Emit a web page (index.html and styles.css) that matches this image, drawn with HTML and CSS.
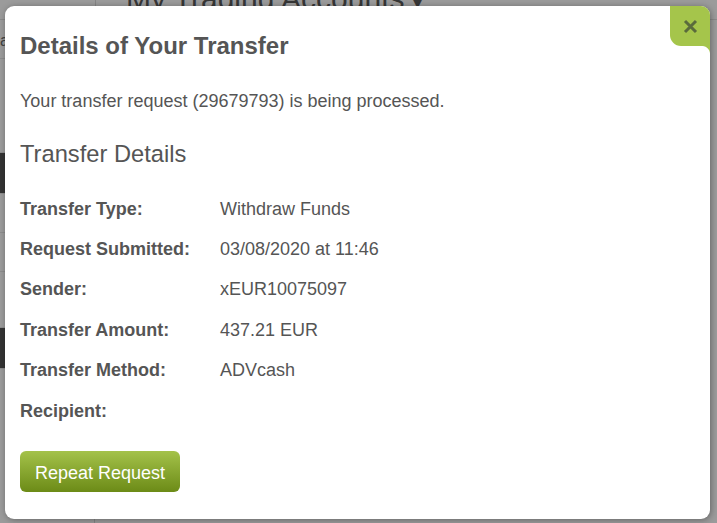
FILE: index.html
```html
<!DOCTYPE html>
<html lang="en">
<head>
    <meta charset="UTF-8">
    <meta name="viewport" content="width=device-width, initial-scale=1.0">
    <title>My Trading Accounts</title>
    <link rel="stylesheet" href="styles.css">
</head>
<body>
    <div class="page">
        <header class="page-head">
            <div class="logo-cell"></div>
            <h1>My Trading Accounts <span class="caret">&#9662;</span></h1>
        </header>
        <aside class="side">
            <div class="side-row">a</div>
            <div class="side-row"></div>
            <div class="side-row dark"></div>
            <div class="side-row"></div>
            <div class="side-row"></div>
            <div class="side-row"></div>
            <div class="side-row dark"></div>
        </aside>
    </div>
    <div class="overlay"></div>

    <div class="modal">
        <a href="#" class="modal-close">
            <svg width="15" height="15" viewBox="0 0 15 15">
                <path d="M2 2 L13 13 M13 2 L2 13" stroke="#5a6b3c" stroke-width="3" fill="none"/>
            </svg>
        </a>
        <h2>Details of Your Transfer</h2>
        <p class="status">Your transfer request (29679793) is being processed.</p>
        <h3>Transfer Details</h3>
        <dl class="details">
            <dt>Transfer Type:</dt>
            <dd>Withdraw Funds</dd>
            <dt>Request Submitted:</dt>
            <dd>03/08/2020 at 11:46</dd>
            <dt>Sender:</dt>
            <dd>xEUR10075097</dd>
            <dt>Transfer Amount:</dt>
            <dd>437.21 EUR</dd>
            <dt>Transfer Method:</dt>
            <dd>ADVcash</dd>
            <dt>Recipient:</dt>
            <dd></dd>
        </dl>
        <button type="button" class="btn-repeat">Repeat Request</button>
    </div>
</body>
</html>
```

FILE: styles.css
```css
body{
    margin: 0;
    height: 523px;
    overflow: hidden;
    font-family: 'Liberation Sans', Arial, sans-serif;
    background: #f2f2f2;
}

/* page behind the dialog */
.page{
    height: 100%;
    display: grid;
    grid-template-columns: 95px 1fr;
    grid-template-rows: 20px 1fr;
}
.page-head{
    grid-column: 1 / 3;
    display: flex;
    border-bottom: 1px solid #d8d8d8;
}
.logo-cell{
    width: 95px;
    border-right: 1px solid #d0d0d0;
}
.page-head h1{
    margin: -18px 0 0 30px;
    font-weight: normal;
    font-size: 30px;
    color: #555;
}
.caret{
    font-size: 18px;
}
.side{
    display: flex;
    flex-direction: column;
    border-right: 1px solid #d0d0d0;
}
.side-row{
    height: 39px;
    border-bottom: 1px solid #dcdcdc;
    color: #666;
    font-size: 16px;
    padding-top: 12px;
    box-sizing: border-box;
}
.side-row:nth-child(2){
    height: 94px;
}
.side-row.dark{
    background: #505050;
    height: 41px;
}
.side-row:nth-child(6){
    height: 56px;
}

.overlay{
    position: absolute;
    inset: 0;
    background: rgba(0, 0, 0, .36);
}

/* dialog */
.modal{
    position: absolute;
    left: 5px;
    top: 6px;
    width: 705px;
    height: 513px;
    box-sizing: border-box;
    padding: 26px 15px 0;
    background: #fff;
    border-radius: 9px;
    box-shadow: 1px 1px 6px rgba(0, 0, 0, .35);
    color: #555;
}
.modal-close{
    position: absolute;
    top: 0;
    right: 0;
    width: 40px;
    height: 40px;
    display: flex;
    align-items: center;
    justify-content: center;
    background: #a5c54b;
    border-radius: 0 9px 0 11px;
}
/* small concave tail under the tab, along the dialog edge */
.modal-close::after{
    content: "";
    position: absolute;
    top: 100%;
    right: 0;
    width: 8px;
    height: 8px;
    background: radial-gradient(circle at 0 100%, transparent 7.5px, #a5c54b 8.5px);
}
.modal h2{
    margin: 0;
    font-size: 24px;
    line-height: 28px;
}
.status{
    margin: 29px 0 0;
    font-size: 18px;
    line-height: 24px;
}
.modal h3{
    margin: 26px 0 0;
    font-weight: normal;
    font-size: 23.7px;
    line-height: 30px;
}
.details{
    display: grid;
    grid-template-columns: 200px 1fr;
    grid-auto-rows: 40.4px;
    align-items: center;
    margin: 20px 0 0;
    font-size: 18px;
}
.details dt{
    font-weight: bold;
}
.details dd{
    margin: 0;
}
.btn-repeat{
    display: block;
    margin-top: 20px;
    width: 160px;
    height: 41px;
    padding: 3px 0 0;
    border: 0;
    border-radius: 6px;
    background: linear-gradient(#a4c24a, #6c8b17);
    color: #fff;
    font-family: inherit;
    font-size: 18px;
}
```
